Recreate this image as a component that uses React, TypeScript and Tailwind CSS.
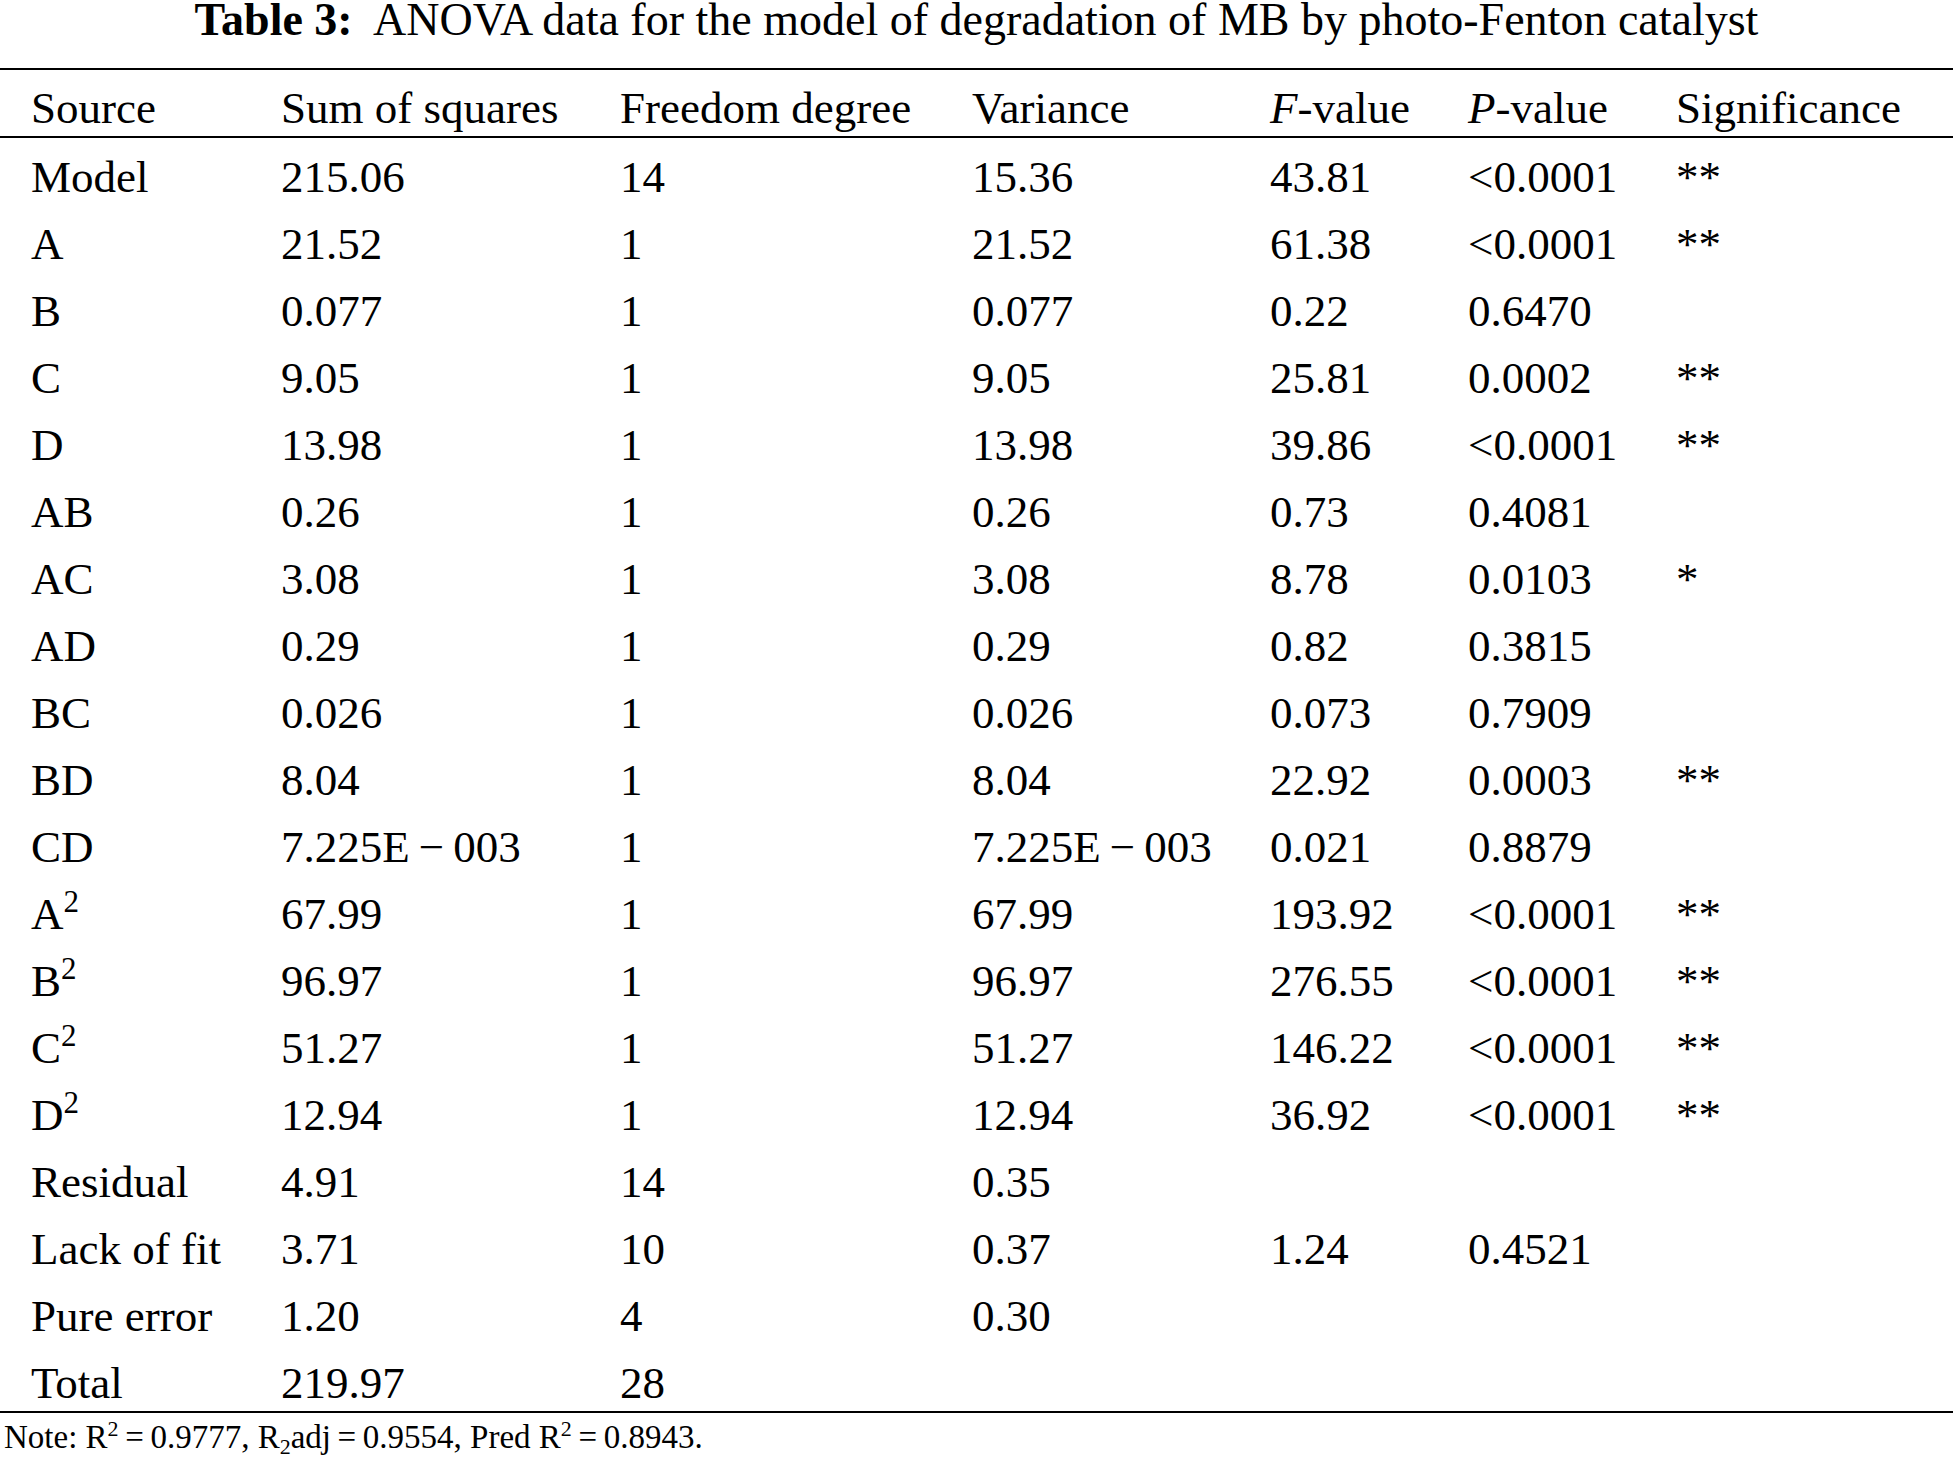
import React from "react";

type Cell = React.ReactNode;

const sup = (base: string) => (
  <span>
    {base}
    <span className="relative top-[-17px] text-[31px] leading-none">2</span>
  </span>
);

const rows: Cell[][] = [
  ["Model", "215.06", "14", "15.36", "43.81", "<0.0001", "**"],
  ["A", "21.52", "1", "21.52", "61.38", "<0.0001", "**"],
  ["B", "0.077", "1", "0.077", "0.22", "0.6470", ""],
  ["C", "9.05", "1", "9.05", "25.81", "0.0002", "**"],
  ["D", "13.98", "1", "13.98", "39.86", "<0.0001", "**"],
  ["AB", "0.26", "1", "0.26", "0.73", "0.4081", ""],
  ["AC", "3.08", "1", "3.08", "8.78", "0.0103", "*"],
  ["AD", "0.29", "1", "0.29", "0.82", "0.3815", ""],
  ["BC", "0.026", "1", "0.026", "0.073", "0.7909", ""],
  ["BD", "8.04", "1", "8.04", "22.92", "0.0003", "**"],
  ["CD", "7.225E\u2009\u2212\u2009003", "1", "7.225E\u2009\u2212\u2009003", "0.021", "0.8879", ""],
  [sup("A"), "67.99", "1", "67.99", "193.92", "<0.0001", "**"],
  [sup("B"), "96.97", "1", "96.97", "276.55", "<0.0001", "**"],
  [sup("C"), "51.27", "1", "51.27", "146.22", "<0.0001", "**"],
  [sup("D"), "12.94", "1", "12.94", "36.92", "<0.0001", "**"],
  ["Residual", "4.91", "14", "0.35", "", "", ""],
  ["Lack of fit", "3.71", "10", "0.37", "1.24", "0.4521", ""],
  ["Pure error", "1.20", "4", "0.30", "", "", ""],
  ["Total", "219.97", "28", "", "", "", ""],
];

const grid = "grid grid-cols-[250px_339px_352px_298px_198px_208px_1fr] pl-[31px]";

export default function App() {
  return (
    <div
      className="w-[1957px] h-[1460px] bg-white text-black"
      style={{ fontFamily: '"Liberation Serif", "Times New Roman", serif' }}
    >
      <div className="w-[1953px]">
        <div className="h-[68px] text-center text-[46px] leading-[39px] whitespace-pre">
          <span className="font-bold">Table 3:</span>
          {"  ANOVA data for the model of degradation of MB by photo-Fenton catalyst"}
        </div>
        <div className={`${grid} h-[70px] border-t-2 border-b-2 border-black items-end pb-[5px] text-[45px] leading-[45px]`}>
          <div>Source</div>
          <div>Sum of squares</div>
          <div>Freedom degree</div>
          <div>Variance</div>
          <div>
            <i>F</i>-value
          </div>
          <div>
            <i>P</i>-value
          </div>
          <div>Significance</div>
        </div>
        <div className="border-b-2 border-black">
          {rows.map((r, i) => (
            <div key={i} className={`${grid} h-[67px] pt-[17px] text-[45px] leading-[45px]`}>
              {r.map((c, j) => (
                <div key={j} className="whitespace-pre">
                  {c}
                </div>
              ))}
            </div>
          ))}
        </div>
        <div className="pt-[8px] pl-[4px] text-[33px] leading-[33px] whitespace-pre">
          {"Note: R"}
          <span className="relative top-[-12px] text-[22px] leading-none">2</span>
          {"\u2009=\u20090.9777, R"}
          <span className="relative top-[6px] text-[22px] leading-none">2</span>
          {"adj\u2009=\u20090.9554, Pred R"}
          <span className="relative top-[-12px] text-[22px] leading-none">2</span>
          {"\u2009=\u20090.8943."}
        </div>
      </div>
    </div>
  );
}
